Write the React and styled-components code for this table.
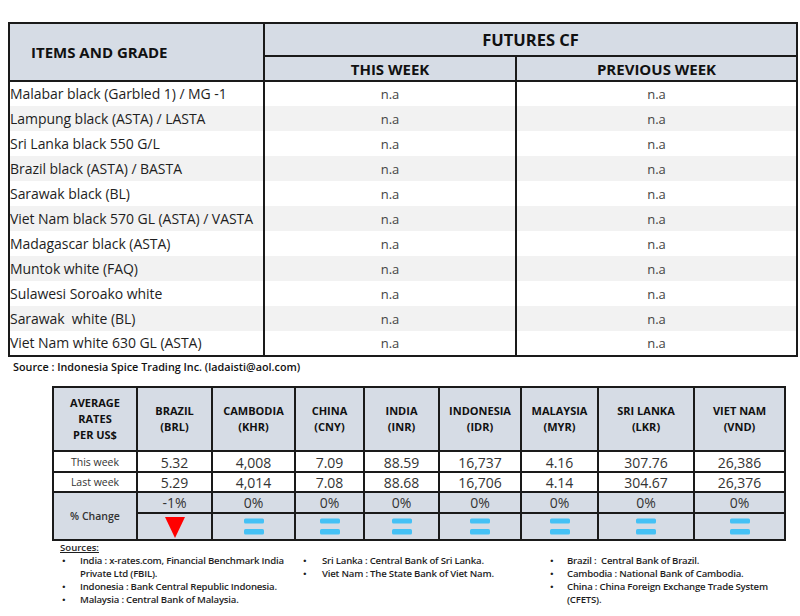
import React from "react";
import styled, { createGlobalStyle } from "styled-components";

const Global = createGlobalStyle`
  html, body { margin: 0; padding: 0; background: #ffffff; }
  body { font-family: "Open Sans", "Noto Sans", sans-serif; color: #1e1e1e; }
`;

const Page = styled.div`
  width: 800px;
  height: 616px;
  padding-top: 22px;
  box-sizing: border-box;
  overflow: hidden;
`;

const TopTable = styled.table`
  margin-left: 8px;
  width: 788px;
  border-collapse: collapse;
  table-layout: fixed;
  border: 2px solid #1a1a1a;
`;

const Col = styled.col`
  width: ${(p) => p.$w}px;
`;

const HeadCell = styled.th`
  background: #d6dce5;
  border: 2px solid #1a1a1a;
  font-weight: 700;
  font-size: ${(p) => p.$fs || 15}px;
  color: #111;
  height: ${(p) => p.$h || 25}px;
  padding: 0;
  text-align: ${(p) => (p.$left ? "left" : "center")};
  padding-left: ${(p) => (p.$left ? 21 : 0)}px;
  vertical-align: middle;
  box-sizing: border-box;
  line-height: 18px;
`;

const DataRow = styled.tr`
  background: ${(p) => (p.$alt ? "#f2f2f2" : "#ffffff")};
  height: 25px;
`;

const ItemCell = styled.td`
  border-left: 2px solid #1a1a1a;
  border-right: 2px solid #1a1a1a;
  padding: 0;
  font-size: 14px;
  line-height: 18px;
  color: #1e1e1e;
  white-space: nowrap;
  letter-spacing: -0.05px;
`;

const NaCell = styled.td`
  border-left: 2px solid #1a1a1a;
  border-right: 2px solid #1a1a1a;
  padding: 0;
  font-size: 13px;
  line-height: 18px;
  color: #444;
  text-align: center;
`;

const SourceLine = styled.div`
  margin: 0 0 0 13px;
  font-size: 10.8px;
  font-weight: 600;
  color: #111;
  height: 20px;
  line-height: 20px;
`;

const RatesTable = styled.table`
  margin: 9px 0 0 52px;
  width: 734px;
  border-collapse: collapse;
  table-layout: fixed;
  border: 2px solid #1a1a1a;
`;

const RateHead = styled.th`
  background: #d6dce5;
  border: 2px solid #1a1a1a;
  height: 62px;
  padding: 0;
  font-size: 11px;
  font-weight: 700;
  line-height: 16px;
  color: #111;
  text-align: center;
  vertical-align: middle;
`;

const RateRow = styled.tr`
  height: ${(p) => p.$h}px;
  background: ${(p) => (p.$shade ? "#d6dce5" : "#ffffff")};
`;

const RowLabel = styled.td`
  border: 2px solid #1a1a1a;
  padding: 0;
  font-size: 10.5px;
  line-height: 14px;
  color: #333;
  text-align: center;
  font-weight: ${(p) => (p.$bold ? 600 : 400)};
  background: ${(p) => (p.$shade ? "#d6dce5" : "transparent")};
`;

const RateCell = styled.td`
  border-left: 2px solid #1a1a1a;
  border-right: 2px solid #1a1a1a;
  border-top: ${(p) => (p.$lineTop ? "2px solid #1a1a1a" : "none")};
  border-bottom: ${(p) => (p.$lineBottom ? "2px solid #1a1a1a" : "none")};
  padding: ${(p) => (p.$down ? "2px 0 0" : "0")};
  font-size: 14px;
  color: #333;
  text-align: center;
  line-height: 16px;
  vertical-align: middle;
`;

const IconCell = styled.td`
  border-left: 2px solid #1a1a1a;
  border-right: 2px solid #1a1a1a;
  border-top: 2px solid #1a1a1a;
  padding: 0;
  text-align: center;
  vertical-align: ${(p) => (p.$bottom ? "bottom" : "middle")};
  line-height: 0;
`;

const Sources = styled.div`
  margin: 1px 0 0 60px;
  font-size: 9.6px;
  font-weight: 600;
  color: #1e1e1e;
  line-height: 13px;
  letter-spacing: -0.2px;
`;

const SourcesTitle = styled.div`
  text-decoration: underline;
  letter-spacing: 0;
  line-height: 12px;
`;

const SourceCols = styled.div`
  display: grid;
  grid-template-columns: 241px 247px 230px;
  margin-left: 2px;
`;

const SourceList = styled.ul`
  list-style: none;
  margin: 0;
  padding: 0;
`;

const SourceItem = styled.li`
  display: flex;
`;

const Bullet = styled.span`
  width: ${(p) => p.$w || 18}px;
  flex: none;
`;

const SourceText = styled.span`
  width: ${(p) => p.$w}px;
`;

const DownArrow = () => (
  <svg width="20" height="21" viewBox="0 0 20 21" style={{ display: "block", margin: "0 auto 1px" }}>
    <polygon points="0,0 20,0 10,21" fill="#ff0000" />
  </svg>
);

const Equal = () => (
  <svg width="20" height="17" viewBox="0 0 20 17">
    <rect x="0" y="0.5" width="20" height="5" rx="1.5" fill="#45c1f5" />
    <rect x="0" y="11" width="20" height="5.5" rx="1.5" fill="#45c1f5" />
  </svg>
);

const items = [
  "Malabar black (Garbled 1) / MG -1",
  "Lampung black (ASTA) / LASTA",
  "Sri Lanka black 550 G/L",
  "Brazil black (ASTA) / BASTA",
  "Sarawak black (BL)",
  "Viet Nam black 570 GL (ASTA) / VASTA",
  "Madagascar black (ASTA)",
  "Muntok white (FAQ)",
  "Sulawesi Soroako white",
  "Sarawak\u00a0 white (BL)",
  "Viet Nam white 630 GL (ASTA)",
];

const countries = [
  { name: "BRAZIL", code: "(BRL)", w: 75, tw: "5.32", lw: "5.29", ch: "-1%", dir: "down" },
  { name: "CAMBODIA", code: "(KHR)", w: 83, tw: "4,008", lw: "4,014", ch: "0%" },
  { name: "CHINA", code: "(CNY)", w: 69, tw: "7.09", lw: "7.08", ch: "0%" },
  { name: "INDIA", code: "(INR)", w: 75, tw: "88.59", lw: "88.68", ch: "0%" },
  { name: "INDONESIA", code: "(IDR)", w: 82, tw: "16,737", lw: "16,706", ch: "0%" },
  { name: "MALAYSIA", code: "(MYR)", w: 77, tw: "4.16", lw: "4.14", ch: "0%" },
  { name: "SRI LANKA", code: "(LKR)", w: 96, tw: "307.76", lw: "304.67", ch: "0%" },
  { name: "VIET NAM", code: "(VND)", w: 91, tw: "26,386", lw: "26,376", ch: "0%" },
];

export default function App() {
  return (
    <Page>
      <Global />
      <TopTable>
        <colgroup>
          <Col $w={255} />
          <Col $w={252} />
          <Col $w={281} />
        </colgroup>
        <thead>
          <tr>
            <HeadCell rowSpan={2} $left $fs={15}>ITEMS AND GRADE</HeadCell>
            <HeadCell colSpan={2} $h={33} $fs={16.5}>FUTURES CF</HeadCell>
          </tr>
          <tr>
            <HeadCell $h={25}>THIS WEEK</HeadCell>
            <HeadCell $h={25}>PREVIOUS WEEK</HeadCell>
          </tr>
        </thead>
        <tbody>
          {items.map((it, i) => (
            <DataRow key={it} $alt={i % 2 === 1}>
              <ItemCell>{it}</ItemCell>
              <NaCell>n.a</NaCell>
              <NaCell>n.a</NaCell>
            </DataRow>
          ))}
        </tbody>
      </TopTable>

      <SourceLine>Source : Indonesia Spice Trading Inc. (ladaisti@aol.com)</SourceLine>

      <RatesTable>
        <colgroup>
          <Col $w={84} />
          {countries.map((c) => (
            <Col key={c.name} $w={c.w} />
          ))}
        </colgroup>
        <thead>
          <tr>
            <RateHead>
              AVERAGE
              <br />
              RATES
              <br />
              PER US$
            </RateHead>
            {countries.map((c) => (
              <RateHead key={c.name}>
                {c.name}
                <br />
                {c.code}
              </RateHead>
            ))}
          </tr>
        </thead>
        <tbody>
          <RateRow $h={21}>
            <RowLabel>This week</RowLabel>
            {countries.map((c) => (
              <RateCell key={c.name} $lineBottom $down>{c.tw}</RateCell>
            ))}
          </RateRow>
          <RateRow $h={20}>
            <RowLabel>Last week</RowLabel>
            {countries.map((c) => (
              <RateCell key={c.name} $down>{c.lw}</RateCell>
            ))}
          </RateRow>
          <RateRow $h={21} $shade>
            <RowLabel rowSpan={2} $bold $shade>% Change</RowLabel>
            {countries.map((c) => (
              <RateCell key={c.name} $lineTop>{c.ch}</RateCell>
            ))}
          </RateRow>
          <RateRow $h={27} $shade>
            {countries.map((c) => (
              <IconCell key={c.name} $bottom={c.dir === "down"}>
                {c.dir === "down" ? <DownArrow /> : <Equal />}
              </IconCell>
            ))}
          </RateRow>
        </tbody>
      </RatesTable>

      <Sources>
        <SourcesTitle>Sources:</SourcesTitle>
        <SourceCols>
          <SourceList>
            <SourceItem>
              <Bullet>•</Bullet>
              <SourceText $w={215}>India : x-rates.com, Financial Benchmark India Private Ltd (FBIL).</SourceText>
            </SourceItem>
            <SourceItem>
              <Bullet>•</Bullet>
              <SourceText $w={215}>Indonesia : Bank Central Republic Indonesia.</SourceText>
            </SourceItem>
            <SourceItem>
              <Bullet>•</Bullet>
              <SourceText $w={215}>Malaysia : Central Bank of Malaysia.</SourceText>
            </SourceItem>
          </SourceList>
          <SourceList>
            <SourceItem>
              <Bullet $w={19}>•</Bullet>
              <SourceText $w={220}>Sri Lanka : Central Bank of Sri Lanka.</SourceText>
            </SourceItem>
            <SourceItem>
              <Bullet $w={19}>•</Bullet>
              <SourceText $w={220}>Viet Nam : The State Bank of Viet Nam.</SourceText>
            </SourceItem>
          </SourceList>
          <SourceList>
            <SourceItem>
              <Bullet $w={17}>•</Bullet>
              <SourceText $w={212}>Brazil :&nbsp; Central Bank of Brazil.</SourceText>
            </SourceItem>
            <SourceItem>
              <Bullet $w={17}>•</Bullet>
              <SourceText $w={212}>Cambodia : National Bank of Cambodia.</SourceText>
            </SourceItem>
            <SourceItem>
              <Bullet $w={17}>•</Bullet>
              <SourceText $w={212}>China : China Foreign Exchange Trade System (CFETS).</SourceText>
            </SourceItem>
          </SourceList>
        </SourceCols>
      </Sources>
    </Page>
  );
}
